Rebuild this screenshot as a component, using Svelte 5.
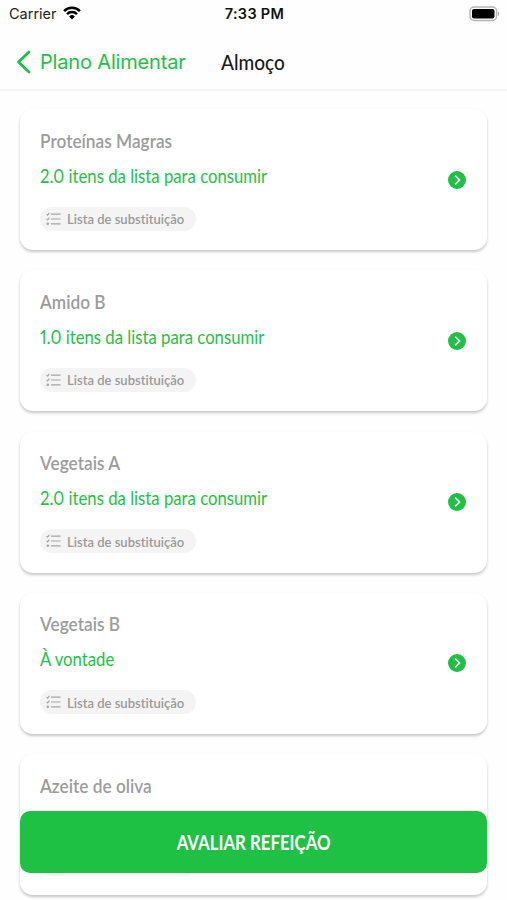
<script lang="ts">
  type Item = { name: string; amount: string };

  const items: Item[] = [
    { name: 'Proteínas Magras', amount: '2.0 itens da lista para consumir' },
    { name: 'Amido B', amount: '1.0 itens da lista para consumir' },
    { name: 'Vegetais A', amount: '2.0 itens da lista para consumir' },
    { name: 'Vegetais B', amount: 'À vontade' },
    { name: 'Azeite de oliva', amount: '' }
  ];
</script>

<div class="screen">
  <div class="status">
    <div class="carrier">
      <span>Carrier</span>
      <svg width="18" height="14" viewBox="0 0 18 14" fill="none" stroke="#000" stroke-width="2.5">
        <path d="M1.1 5.1a11.2 11.2 0 0 1 15.8 0" />
        <path d="M4 8.2a7 7 0 0 1 10 0" />
        <path d="M9 13.5 6.1 10.4a4.2 4.2 0 0 1 5.8 0z" fill="#000" stroke="none" />
      </svg>
    </div>
    <span class="time">7:33 PM</span>
    <svg class="battery" width="31" height="16" viewBox="0 0 31 16">
      <rect x="1" y="1" width="26.5" height="13.5" rx="4" fill="#fff" stroke="#b5b5b5" stroke-width="1.4" />
      <rect x="3" y="3" width="22.5" height="9.5" rx="2" fill="#000" />
      <path d="M28.8 5.5c2 .6 2 3.9 0 4.5z" fill="#a8a8a8" />
    </svg>
  </div>

  <header class="nav">
    <button class="back">
      <svg width="16" height="24" viewBox="0 0 16 24" fill="none" stroke="#1fc145" stroke-width="2.8" stroke-linecap="round" stroke-linejoin="round">
        <path d="M13 2 2.5 12 13 22" />
      </svg>
      <span>Plano Alimentar</span>
    </button>
    <h1><span>Almoço</span></h1>
  </header>

  <main class="list">
    {#each items as item}
      <div class="card">
        <div class="info">
          <h2><span>{item.name}</span></h2>
          <p><span>{item.amount}</span></p>
          <div class="chip">
            <svg width="15" height="14" viewBox="0 0 15 14" fill="none" stroke="#a3a3a3">
              <path d="M5 2.2h9.5M5 7h9.5M5 11.8h9.5" stroke-width="1.2" />
              <path d="M.6 2.1l1 1L3.4.9M.6 6.9l1 1 1.8-2.2" stroke-width="1.1" />
              <circle cx="1.8" cy="11.8" r="1.3" fill="#a3a3a3" stroke="none" />
            </svg>
            <span class="chip-label">Lista de substituição</span>
          </div>
        </div>
        <svg class="arrow" width="18" height="18" viewBox="0 0 18 18" fill="none">
          <circle cx="9" cy="9" r="9" fill="#1fc145" />
          <path d="M7.1 4.6 11.5 9l-4.4 4.4" stroke="#fff" stroke-width="1.6" />
        </svg>
      </div>
    {/each}
  </main>

  <button class="rate"><span>AVALIAR REFEIÇÃO</span></button>
</div>

<style>
  :global(body) {
    background: #fff;
  }

  .screen {
    position: relative;
    width: 507px;
    height: 900px;
    overflow: hidden;
    background: #fefefe;
    font-family: Lato, 'Open Sans', sans-serif;
    font-variant-ligatures: none;
  }

  button {
    border: 0;
    padding: 0;
    background: none;
    font: inherit;
  }

  .status {
    display: grid;
    grid-template-columns: 1fr auto 1fr;
    align-items: center;
    height: 28px;
    padding: 0 7px 0 9px;
    font-family: Inter, 'Liberation Sans', sans-serif;
    font-size: 14.5px;
    color: #222;
  }

  .carrier {
    display: flex;
    align-items: center;
    gap: 6px;
    margin-top: -2px;
  }

  .time {
    margin-top: -1px;
    font-weight: 600;
    letter-spacing: 0.3px;
    color: #111;
  }

  .battery {
    justify-self: end;
    margin-top: -1px;
  }

  .nav {
    display: flex;
    align-items: center;
    box-sizing: border-box;
    height: 63px;
    padding: 7px 0 0 16px;
    border-bottom: 2px solid #f4f4f4;
  }

  .back {
    display: flex;
    align-items: center;
    gap: 8px;
    width: 205px;
    white-space: nowrap;
    font-family: Inter, 'Liberation Sans', sans-serif;
    font-size: 20px;
    letter-spacing: -0.17px;
    color: #1fc145;
  }

  h1,
  h2,
  p {
    margin: 0;
    white-space: nowrap;
  }

  /* narrow the letterforms while keeping their height */
  h1 span,
  h2 span,
  p span {
    display: inline-block;
    transform: scaleX(0.885);
    transform-origin: left center;
  }

  h1 {
    font-size: 21px;
    font-weight: 500;
    line-height: 26px;
    color: #1a1a1a;
  }

  h1 span {
    transform: scaleX(0.905);
  }

  .list {
    display: flex;
    flex-direction: column;
    gap: 20.3px;
    padding: 18px 20px 0;
  }

  .card {
    display: flex;
    align-items: center;
    justify-content: space-between;
    box-sizing: border-box;
    flex: none;
    height: 141px;
    padding: 0 21px 0 20px;
    border-radius: 13px;
    background: #fff;
    box-shadow: 0 2px 3px rgba(0, 0, 0, 0.22);
  }

  h2 {
    height: 24px;
    font-size: 19.5px;
    font-weight: 600;
    line-height: 24px;
    color: #9c9c9c;
  }

  p {
    height: 24px;
    margin-top: 10px;
    font-size: 20px;
    font-weight: 400;
    line-height: 24px;
    font-variant-numeric: proportional-nums;
    color: #1fc145;
  }

  p span {
    transform: scaleX(0.836);
  }

  .chip {
    display: flex;
    align-items: center;
    gap: 6px;
    box-sizing: border-box;
    width: 156px;
    height: 24px;
    margin-top: 20px;
    padding-left: 6px;
    border-radius: 12px;
    background: #f4f4f4;
  }

  .chip-label {
    font-size: 14px;
    font-weight: 600;
    white-space: nowrap;
    color: #999;
    transform: scaleX(0.93);
    transform-origin: left center;
  }

  .rate {
    position: absolute;
    left: 20px;
    right: 20px;
    top: 811px;
    height: 62px;
    border-radius: 10px;
    background: #1fc145;
    font-size: 20px;
    font-weight: 700;
    color: #fff;
  }

  .rate span {
    display: inline-block;
    transform: scaleX(0.84);
  }
</style>
